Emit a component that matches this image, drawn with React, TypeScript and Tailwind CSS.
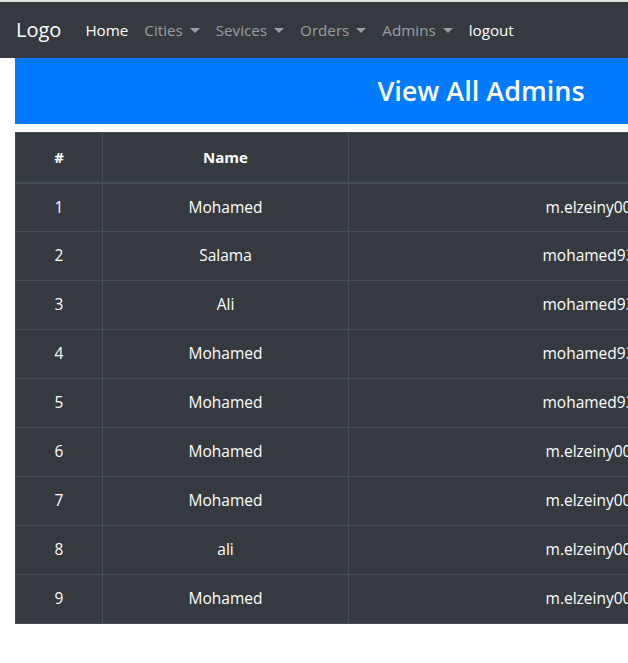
const admins = [
  { id: 1, name: "Mohamed", email: "m.elzeiny0066@gmail.com" },
  { id: 2, name: "Salama", email: "mohamed9300@gmail.com" },
  { id: 3, name: "Ali", email: "mohamed9300@gmail.com" },
  { id: 4, name: "Mohamed", email: "mohamed9300@gmail.com" },
  { id: 5, name: "Mohamed", email: "mohamed9300@gmail.com" },
  { id: 6, name: "Mohamed", email: "m.elzeiny0066@gmail.com" },
  { id: 7, name: "Mohamed", email: "m.elzeiny0066@gmail.com" },
  { id: 8, name: "ali", email: "m.elzeiny0066@gmail.com" },
  { id: 9, name: "Mohamed", email: "m.elzeiny0066@gmail.com" },
];

function Caret() {
  return (
    <span className="ml-[7px] inline-block h-0 w-0 border-x-[5px] border-t-[5px] border-x-transparent border-t-current align-[3px]" />
  );
}

function NavLink({ label, active, dropdown }: { label: string; active?: boolean; dropdown?: boolean }) {
  return (
    <a
      href="#"
      className={`px-2 py-2 ${active ? "text-white" : "text-white/50"}`}
    >
      {label}
      {dropdown && <Caret />}
    </a>
  );
}

export default function App() {
  return (
    <div
      className="w-[628px] h-[663px] overflow-hidden bg-white border-t-2 border-[#e1e1e1]"
      style={{ fontFamily: '"Open Sans", "Noto Sans", sans-serif' }}
    >
      <nav className="h-14 bg-[#343a40] flex items-center px-4 text-[15.2px] whitespace-nowrap">
        <a href="#" className="text-white text-xl mr-4 leading-[30px]">Logo</a>
        <div className="flex items-center">
          <NavLink label="Home" active />
          <NavLink label="Cities" dropdown />
          <NavLink label="Sevices" dropdown />
          <NavLink label="Orders" dropdown />
          <NavLink label="Admins" dropdown />
          <NavLink label="logout" active />
        </div>
      </nav>

      <div className="w-[962px] px-[15px]">
        <div className="h-[66px] bg-[#007bff] flex items-center justify-center">
          <h3 className="text-white text-[27px] font-semibold">View All Admins</h3>
        </div>

        <table className="mt-2 w-[932px] table-fixed border-collapse bg-[#343a40] text-white text-center text-[15.5px]">
          <colgroup>
            <col className="w-[87px]" />
            <col className="w-[246px]" />
            <col className="w-[586px]" />
            <col />
          </colgroup>
          <thead>
            <tr className="h-[50px]">
              <th className="border border-b-2 border-[#454d55] text-[15px] font-bold">#</th>
              <th className="border border-b-2 border-[#454d55] text-[15px] font-bold">Name</th>
              <th className="border border-b-2 border-[#454d55] text-[15px] font-bold"></th>
              <th className="border border-b-2 border-[#454d55] text-[15px] font-bold">Actions</th>
            </tr>
          </thead>
          <tbody>
            {admins.map((a) => (
              <tr key={a.id} className="h-[49px]">
                <td className="border border-[#454d55]">{a.id}</td>
                <td className="border border-[#454d55]">{a.name}</td>
                <td className="border border-[#454d55]">{a.email}</td>
                <td className="border border-[#454d55]"></td>
              </tr>
            ))}
          </tbody>
        </table>
      </div>
    </div>
  );
}
